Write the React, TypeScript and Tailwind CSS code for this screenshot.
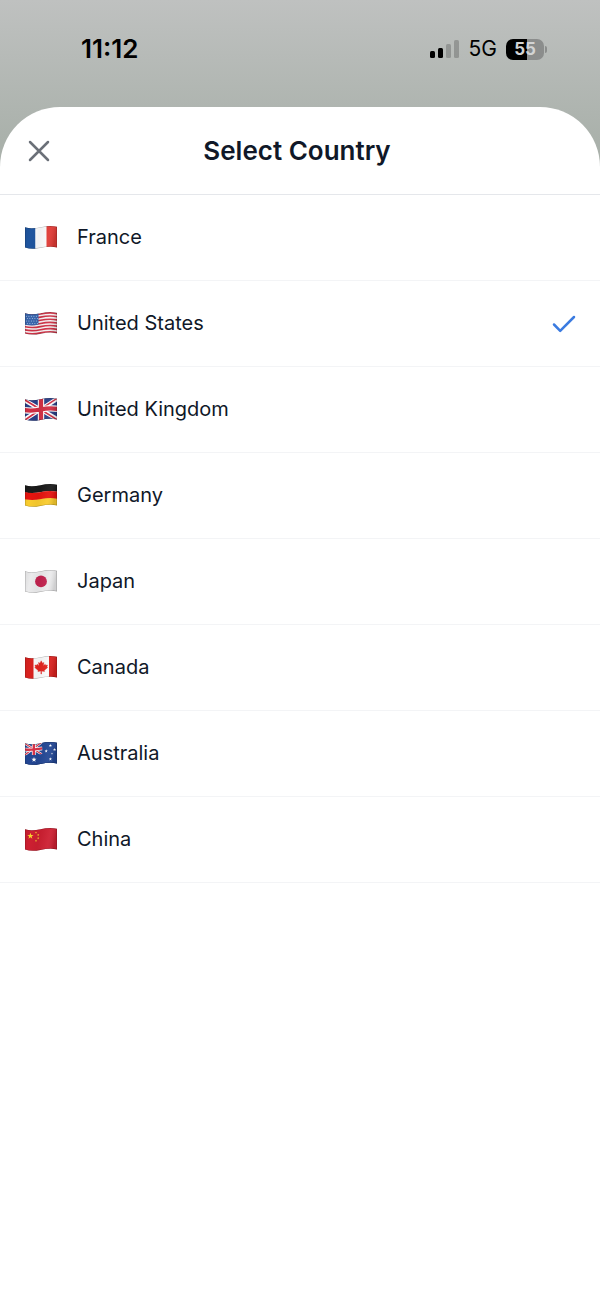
import { useId, useState } from 'react';
import type { ReactNode } from 'react';

const WAVE = 'M1 2.2 C6 3.9 11 3.3 16.5 2.2 C22 1 28 0.6 33 1.8 V22.4 C28 21.4 22 21.8 16.5 22.9 C11 24 6 24.2 1 22.6 Z';
const STAR = '0,-1 0.24,-0.32 0.95,-0.31 0.38,0.12 0.59,0.81 0,0.4 -0.59,0.81 -0.38,0.12 -0.95,-0.31 -0.24,-0.32';

function Star({ x, y, r, fill }: { x: number; y: number; r: number; fill: string }) {
  return <polygon points={STAR} fill={fill} transform={`translate(${x} ${y}) scale(${r})`} />;
}

// horizontal band that follows the ripple of the cloth
function Band({ y, h, fill }: { y: number; h: number; fill: string }) {
  return (
    <path
      d="M-1 1.8 C6 3.9 11 3.3 16.5 2.2 C22 1 28 0.6 34 2"
      transform={`translate(0 ${y + h / 2})`}
      fill="none"
      stroke={fill}
      strokeWidth={h}
    />
  );
}

function UnionJack() {
  return (
    <>
      <path d="M0 0H33V25H0Z" fill="#2a3f86" />
      <path d="M0 3L33 22M0 23L33 2" stroke="#fff" strokeWidth="4.2" />
      <path d="M0 2.4L14 11M33 22.6L19 14M0 23.6L14 14M33 1.4L19 10.6" stroke="#d22f44" strokeWidth="1.6" />
      <path d="M17 0V25M0 13C6 14.2 11 13.6 16.5 12.5S28 11 34 12" stroke="#fff" strokeWidth="6.4" fill="none" />
      <path d="M17 0V25M0 13C6 14.2 11 13.6 16.5 12.5S28 11 34 12" stroke="#d22f44" strokeWidth="4.2" fill="none" />
    </>
  );
}

const countries: { code: string; name: string; flag: ReactNode }[] = [
  {
    code: 'FR',
    name: 'France',
    flag: (
      <>
        <path d="M0 0H11.5V25H0Z" fill="#1f559f" />
        <path d="M11.5 0H22.5V25H11.5Z" fill="#fbfbfc" />
        <path d="M22.5 0H33V25H22.5Z" fill="#e03a35" />
      </>
    ),
  },
  {
    code: 'US',
    name: 'United States',
    flag: (
      <>
        <path d="M0 0H33V25H0Z" fill="#f7f3f4" />
        {[0, 1, 2, 3, 4, 5, 6].map((i) => (
          <Band key={i} y={i * 3.15} h={1.6} fill="#cf3246" />
        ))}
        <path d="M0 0H14.5V13.6C9 14.9 5 14.6 0 13.4Z" fill="#3a66ad" />
        {[0, 1, 2, 3].map((row) =>
          [0, 1, 2, 3, 4].map((col) => (
            <circle key={`${row}-${col}`} cx={2.4 + col * 2.5 + (row % 2)} cy={5.2 + row * 2.4} r="0.5" fill="#b5c8e6" />
          ))
        )}
      </>
    ),
  },
  { code: 'GB', name: 'United Kingdom', flag: <UnionJack /> },
  {
    code: 'DE',
    name: 'Germany',
    flag: (
      <>
        <Band y={-1} h={8} fill="#1b1b1b" />
        <Band y={13.6} h={9} fill="#f9cc2e" />
        <Band y={6.9} h={7} fill="#e6140f" />
      </>
    ),
  },
  {
    code: 'JP',
    name: 'Japan',
    flag: (
      <>
        <path d="M0 0H33V25H0Z" fill="#ebebec" />
        <circle cx="17" cy="12.4" r="5.9" fill="#c2234f" />
      </>
    ),
  },
  {
    code: 'CA',
    name: 'Canada',
    flag: (
      <>
        <path d="M0 0H33V25H0Z" fill="#fafafa" />
        <path d="M0 0H9.5V25H0ZM25 0H33V25H25Z" fill="#d9221f" />
        <path
          d="M16.5 5.6L17.8 8L19.2 7.3L18.7 10.6L20.5 9L20.9 10.1L22.8 9.8L22.2 11.7L23 12.3L19.5 15.2L19.8 16.3L16.8 15.9V18.8H16.2V15.9L13.2 16.3L13.5 15.2L10 12.3L10.8 11.7L10.2 9.8L12.1 10.1L12.5 9L14.3 10.6L13.8 7.3L15.2 8Z"
          transform="translate(0.7 0.2)"
          fill="#e3241f"
          stroke="#e3241f"
          strokeWidth="0.4"
        />
      </>
    ),
  },
  {
    code: 'AU',
    name: 'Australia',
    flag: (
      <>
        <path d="M0 0H33V25H0Z" fill="#234794" />
        <path d="M0 2L18 13.5M0 14.5L18 1" stroke="#fff" strokeWidth="2.4" />
        <path d="M0 2L18 13.5M0 14.5L18 1" stroke="#d8344a" strokeWidth="1.2" />
        <path d="M9.8 0V14M0 8.4C6 9.4 11 8.6 18.5 7.4" stroke="#fff" strokeWidth="3.8" fill="none" />
        <path d="M9.8 0V14M0 8.4C6 9.4 11 8.6 18.5 7.4" stroke="#d8344a" strokeWidth="2.4" fill="none" />
        <path d="M0 14C6 15 12 14.2 18.4 13V0H33V25H0Z" fill="#234794" />
        <Star x={10} y={18.6} r={2.7} fill="#fff" />
        <Star x={26.4} y={4.6} r={1.7} fill="#fff" />
        <Star x={22.2} y={10} r={1.7} fill="#fff" />
        <Star x={30.6} y={8.6} r={1.7} fill="#fff" />
        <Star x={28} y={12.6} r={1} fill="#fff" />
        <Star x={26.4} y={18} r={1.7} fill="#fff" />
      </>
    ),
  },
  {
    code: 'CN',
    name: 'China',
    flag: (
      <>
        <path d="M0 0H33V25H0Z" fill="#cd1f31" />
        <Star x={6.4} y={9} r={3.3} fill="#f8d12f" />
        <Star x={12} y={5.6} r={1.2} fill="#f8d12f" />
        <Star x={14.2} y={8} r={1.2} fill="#f8d12f" />
        <Star x={14.2} y={11.2} r={1.2} fill="#f8d12f" />
        <Star x={12} y={13.8} r={1.2} fill="#f8d12f" />
      </>
    ),
  },
];

function Flag({ children }: { children: ReactNode }) {
  const id = useId();
  return (
    <svg viewBox="0 0 33 25" className="h-[25px] w-[33px] shrink-0" aria-hidden="true">
      <defs>
        <clipPath id={`${id}-cloth`}>
          <path d={WAVE} />
        </clipPath>
        <linearGradient id={`${id}-fold`} x1="0" x2="1" y1="0" y2="0.15">
          <stop offset="0" stopColor="#000" stopOpacity="0.08" />
          <stop offset="0.25" stopColor="#000" stopOpacity="0" />
          <stop offset="0.5" stopColor="#000" stopOpacity="0.04" />
          <stop offset="0.8" stopColor="#fff" stopOpacity="0.05" />
          <stop offset="1" stopColor="#000" stopOpacity="0.12" />
        </linearGradient>
      </defs>
      <g clipPath={`url(#${id}-cloth)`}>
        {children}
        <path d="M0 0H33V25H0Z" fill={`url(#${id}-fold)`} />
        <path d={WAVE} fill="none" stroke="#000" strokeOpacity="0.25" strokeWidth="1" />
      </g>
    </svg>
  );
}

function StatusBar() {
  return (
    <div className="flex items-center justify-between pt-8 pr-[53px] pl-[81px] text-black">
      <time className="text-[26px] leading-[34px] font-semibold">11:12</time>
      <div className="flex items-center gap-[9px]">
        <svg viewBox="0 0 30 19" className="h-[19px] w-[30px]" aria-label="Signal strength" role="img">
          <rect x="0" y="11" width="5" height="7" rx="1.5" />
          <rect x="8" y="8" width="5" height="10" rx="1.5" />
          <rect x="16" y="4" width="5" height="14" rx="1.5" fillOpacity="0.2" />
          <rect x="24" y="0" width="5" height="18" rx="1.5" fillOpacity="0.2" />
        </svg>
        <span className="text-[21px] leading-[34px]">5G</span>
        <div className="flex items-center gap-px">
          <div className="h-[21px] w-[38px] rounded-[7px] bg-linear-to-r from-black from-55% to-[#8b8d8c] to-55% text-center text-[17px] leading-[21px] font-bold text-[#d3d4d4]">
            55
          </div>
          <div className="h-[7px] w-[2px] rounded-r-full bg-[#8b8d8c]" />
        </div>
      </div>
    </div>
  );
}

export default function App() {
  const [selected, setSelected] = useState('US');

  return (
    <div className="flex min-h-screen flex-col bg-linear-to-b from-[#bfc1c0] to-[#aab1ab] to-[140px] font-['Inter','Liberation_Sans',sans-serif]">
      <StatusBar />
      <main className="mt-[41px] flex-1 rounded-t-[60px] bg-white text-gray-900">
        <header className="grid grid-cols-[30px_1fr_36px] items-center border-b border-gray-200 px-6 pt-[26px] pb-[25px]">
          <button type="button" aria-label="Close" className="flex h-9 items-center justify-center text-[#6b7078]">
            <svg viewBox="0 0 24 24" className="size-6" fill="none" stroke="currentColor" strokeWidth="2.5" strokeLinecap="round">
              <path d="M3 3L21 21M21 3L3 21" />
            </svg>
          </button>
          <h1 className="text-center text-[26px] leading-9 font-semibold">Select Country</h1>
        </header>
        <ul>
          {countries.map(({ code, name, flag }) => (
            <li key={code} className="border-b border-gray-100">
              <button
                type="button"
                aria-pressed={selected === code}
                onClick={() => setSelected(code)}
                className="flex w-full items-center gap-5 px-6 py-[27px] text-left"
              >
                <Flag>{flag}</Flag>
                <span className="flex-1 text-[20px] leading-[31px]">{name}</span>
                {selected === code && (
                  <svg viewBox="0 0 24 18" className="h-[18px] w-6" fill="none" stroke="#3b7be0" strokeWidth="2.5" strokeLinecap="round" strokeLinejoin="round" aria-hidden="true">
                    <path d="M2 9.5L8.2 15.8L22 2" />
                  </svg>
                )}
              </button>
            </li>
          ))}
        </ul>
      </main>
    </div>
  );
}
